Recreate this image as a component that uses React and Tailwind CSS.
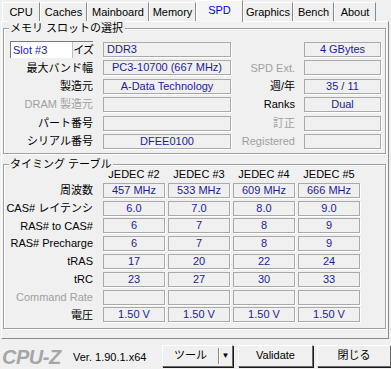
import React from 'react'

const tabs = [
  { label: 'CPU', w: 'w-[38px]' },
  { label: 'Caches', w: 'w-[47px]' },
  { label: 'Mainboard', w: 'w-[62px]' },
  { label: 'Memory', w: 'w-[47px]' },
  { label: 'SPD', w: 'w-[47px]', active: true },
  { label: 'Graphics', w: 'w-[50px]' },
  { label: 'Bench', w: 'w-[41px]' },
  { label: 'About', w: 'w-[42px]' },
]

const timings = [
  { label: '周波数', values: ['457 MHz', '533 MHz', '609 MHz', '666 MHz'] },
  { label: 'CAS# レイテンシ', values: ['6.0', '7.0', '8.0', '9.0'] },
  { label: 'RAS# to CAS#', values: ['6', '7', '8', '9'] },
  { label: 'RAS# Precharge', values: ['6', '7', '8', '9'] },
  { label: 'tRAS', values: ['17', '20', '22', '24'] },
  { label: 'tRC', values: ['23', '27', '30', '33'] },
  { label: 'Command Rate', values: ['', '', '', ''], dim: true },
  { label: '電圧', values: ['1.50 V', '1.50 V', '1.50 V', '1.50 V'] },
]

const boxCls =
  'h-[15px] border border-[#a9a9a9] shadow-[1px_1px_0_#ffffff] flex items-center text-[#1c1c96] leading-none whitespace-nowrap overflow-hidden'

function Field({ children, className = '', left }) {
  return (
    <div className={`${boxCls} ${left ? 'justify-start pl-[3px]' : 'justify-center'} ${className}`}>
      {children}
    </div>
  )
}

function Label({ children, className = '', dim }) {
  return (
    <div className={`flex items-center justify-end whitespace-nowrap ${dim ? 'text-[#a0a0a0]' : 'text-black'} ${className}`}>
      {children}
    </div>
  )
}

function Group({ title, className = '', children }) {
  return (
    <div className={`relative border border-[#a0a0a0] shadow-[inset_1px_1px_0_#ffffff,1px_1px_0_#ffffff] ${className}`}>
      <span className="absolute top-[-8px] left-[5px] bg-[#f0f0f0] pr-[2px] pl-[1px] leading-[14px] text-[11px] text-black">
        {title}
      </span>
      {children}
    </div>
  )
}

function Tab({ label, w, active }) {
  return (
    <div
      className={`${w} flex items-center justify-center border-t border-l border-t-white border-l-white border-r border-r-[#8a8a8a] ${
        active ? 'h-[22px] bg-[#f5f5f5] text-[#0000e6] relative z-10 -mb-[1px] pb-[3px]' : 'h-[19px] bg-[#f0f0f0] text-black'
      }`}
    >
      {label}
    </div>
  )
}

function Btn({ children, className = '' }) {
  return (
    <div
      className={`h-[22px] flex items-center justify-center bg-[#f0f0f0] border border-t-white border-l-white border-r-[#6a6a6a] border-b-[#6a6a6a] shadow-[1px_1px_0_#1a1a1a] text-black ${className}`}
    >
      {children}
    </div>
  )
}

export default function App() {
  return (
    <div className="w-[391px] h-[369px] bg-[#f0f0f0] overflow-hidden font-['Liberation_Sans','Noto_Sans_CJK_JP',sans-serif] text-[11px] text-black select-none">
      {/* タブ */}
      <div className="flex items-end h-[21px] pl-[2px]">
        {tabs.map((t) => (
          <Tab key={t.label} {...t} />
        ))}
      </div>

      {/* パネル */}
      <div className="mx-[1px] w-[388px] h-[318px] border border-t-white border-l-white border-r-[#8a8a8a] border-b-[#8a8a8a] pl-[1px] pr-[2px] pt-[6px]">
        <Group title="メモリ スロットの選択" className="h-[126px] pt-[13px] pb-[3px] pl-0 pr-[3px]">
          <div className="flex flex-col gap-[3.4px]">
            <div className="flex h-[15px]">
              <div className="w-[89px] pl-[6px]">
                <div className="w-[83px] h-[17px] -mt-[1px] flex border-t border-l border-[#7a7a7a] bg-[#f0f0f0]">
                  <div className="w-[62px] h-[16px] bg-white text-[#1818c8] flex items-center pl-[2px] border-r border-[#c0c0c0]">
                    Slot #3
                  </div>
                  <div className="flex-1 flex items-center justify-end whitespace-nowrap tracking-[-1px]">イズ</div>
                </div>
              </div>
              <Field left className="ml-[10px] w-[128px]">DDR3</Field>
              <div className="w-[64px]" />
              <Field className="ml-[9px] w-[77px]">4 GBytes</Field>
            </div>
            {[
              ['最大バンド幅', 'PC3-10700 (667 MHz)', 'SPD Ext.', '', false, true],
              ['製造元', 'A-Data Technology', '週/年', '35 / 11', false, false],
              ['DRAM 製造元', '', 'Ranks', 'Dual', true, false],
              ['パート番号', '', '訂正', '', false, true],
              ['シリアル番号', 'DFEE0100', 'Registered', '', false, true],
            ].map(([l, v, rl, rv, ld, rd]) => (
              <div key={l} className="flex h-[15px]">
                <Label className="w-[89px]" dim={ld}>{l}</Label>
                <Field className="ml-[10px] w-[128px]">{v}</Field>
                <Label className="w-[64px]" dim={rd}>{rl}</Label>
                <Field className="ml-[9px] w-[77px]">{rv}</Field>
              </div>
            ))}
          </div>
        </Group>

        <Group title="タイミング テーブル" className="mt-[10px] ml-0 h-[165px] pb-[5px]">
          <div className="flex flex-col gap-[2.8px]">
            <div className="flex h-[15px] items-end">
              <div className="w-[89px]" />
              <div className="ml-[10px] grid grid-cols-[62px_62px_62px_62px] gap-[3px]">
                {['JEDEC #2', 'JEDEC #3', 'JEDEC #4', 'JEDEC #5'].map((h) => (
                  <div key={h} className="text-center leading-none">{h}</div>
                ))}
              </div>
            </div>
            {timings.map((r) => (
              <div key={r.label} className="flex h-[15px]">
                <Label className="w-[89px]" dim={r.dim}>{r.label}</Label>
                <div className="ml-[10px] grid grid-cols-[62px_62px_62px_62px] gap-[3px]">
                  {r.values.map((v, i) => (
                    <Field key={i}>{v}</Field>
                  ))}
                </div>
              </div>
            ))}
          </div>
        </Group>
      </div>

      {/* 下部バー */}
      <div className="flex items-center h-[30px] pl-[2px] pt-[3px]">
        <div className="w-[71px] pt-[2px] text-[20px] font-bold italic text-[#a6a6a6] leading-none tracking-[-0.5px]">CPU-Z</div>
        <div className="w-[89px] pt-[4px]">Ver. 1.90.1.x64</div>
        <Btn className="w-[71px] justify-start">
          <span className="w-[55px] text-center">ツール</span>
          <span className="h-[16px] border-l border-l-[#8a8a8a] shadow-[inset_1px_0_0_#ffffff] flex-1 flex items-center justify-center text-[8px]">▼</span>
        </Btn>
        <Btn className="ml-[5px] w-[75px]">Validate</Btn>
        <Btn className="ml-[4px] w-[74px]">閉じる</Btn>
      </div>
    </div>
  )
}
